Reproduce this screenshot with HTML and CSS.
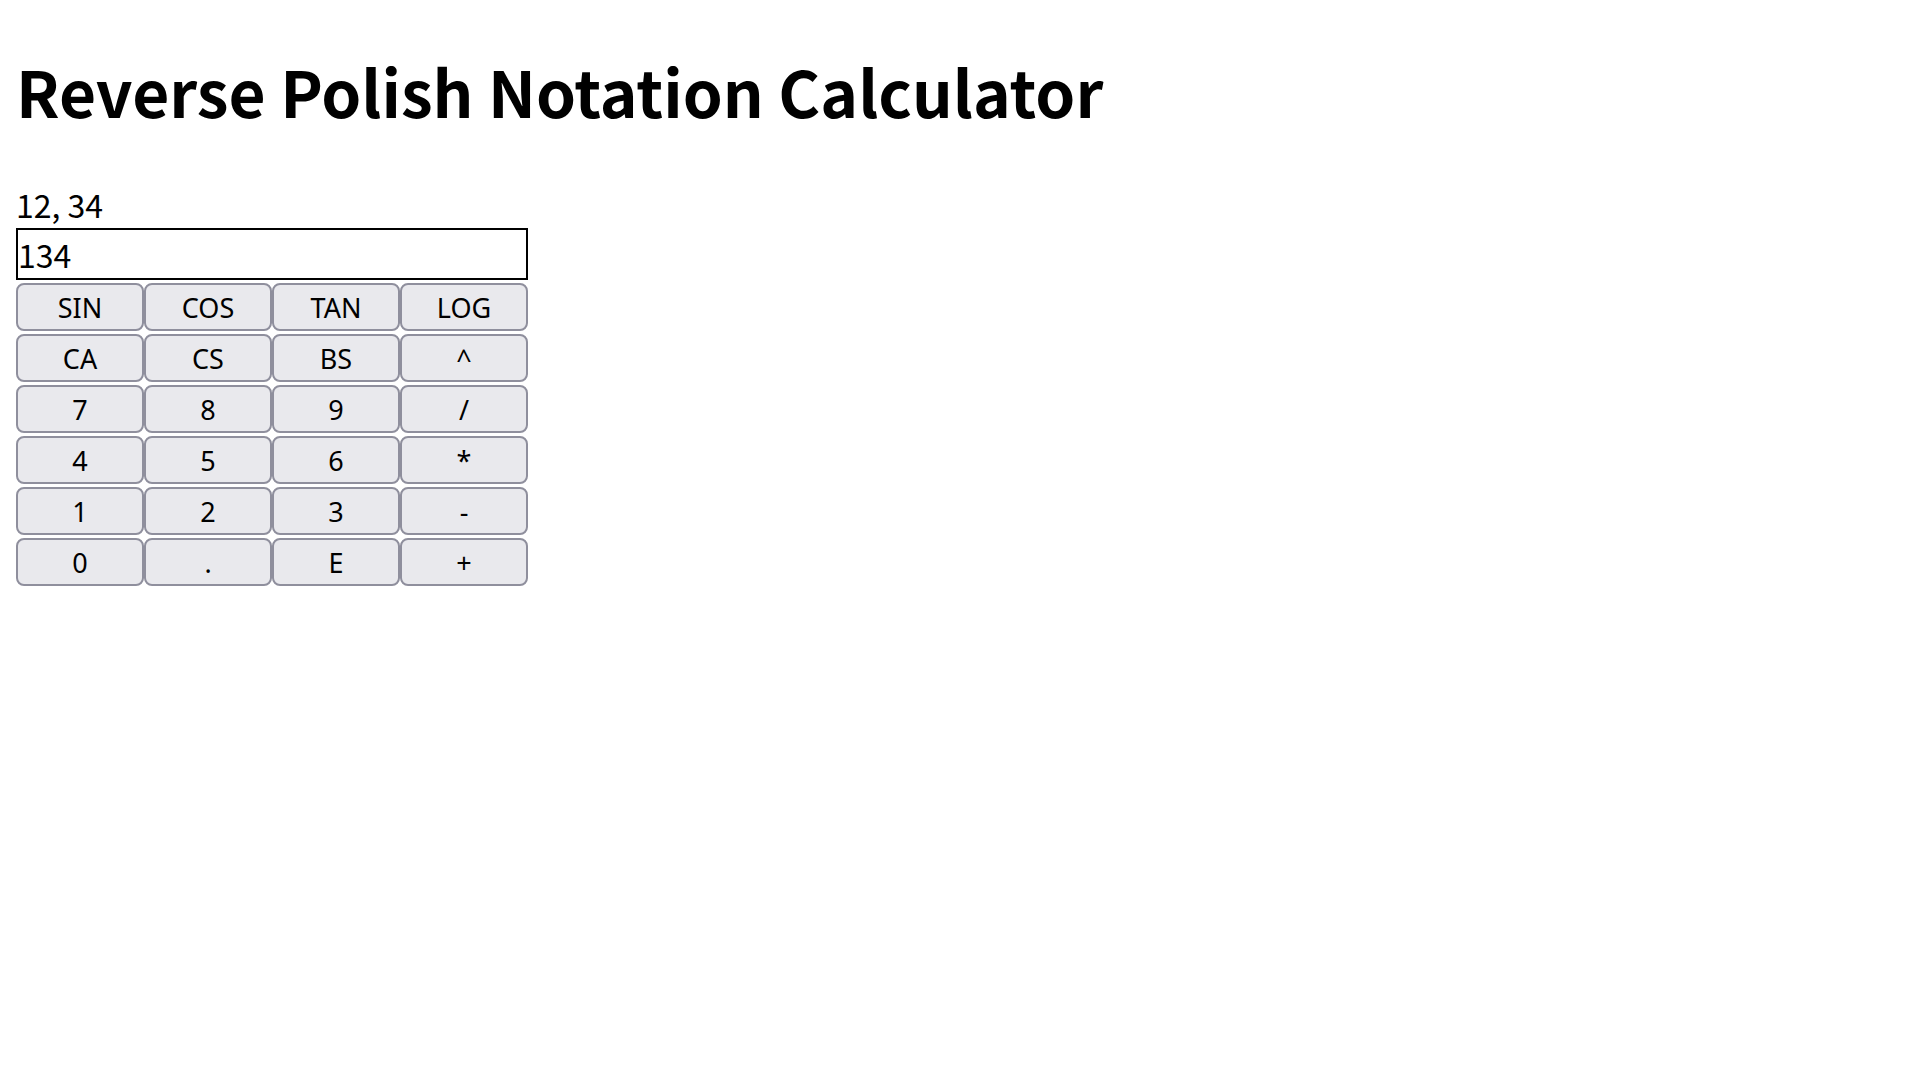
FILE: index.html
```
<!DOCTYPE html>
<html lang="en">
<head>
<meta charset="utf-8">
<title>Reverse Polish Notation Calculator</title>
<link rel="stylesheet" href="styles.css">
</head>
<body>
<h1 class="title">Reverse Polish Notation Calculator</h1>
<main class="calculator">
<output class="stack">12, 34</output>
<input class="display" type="text" value="134" aria-label="Current entry">
<div class="keys">
<button class="key">SIN</button><button class="key">COS</button><button class="key">TAN</button><button class="key">LOG</button>
<button class="key">CA</button><button class="key">CS</button><button class="key">BS</button><button class="key">^</button>
<button class="key">7</button><button class="key">8</button><button class="key">9</button><button class="key">/</button>
<button class="key">4</button><button class="key">5</button><button class="key">6</button><button class="key">*</button>
<button class="key">1</button><button class="key">2</button><button class="key">3</button><button class="key">-</button>
<button class="key">0</button><button class="key">.</button><button class="key">E</button><button class="key">+</button>
</div>
</main>
</body>
</html>
```
FILE: styles.css
```
body {
  margin: 0;
  padding: 16px;
  background: #fff;
  color: #000;
  font-family: "Noto Sans CJK SC", "Noto Sans", sans-serif;
  font-size: 32px;
}

.title {
  margin: 28px 0 44px;
  font-size: 64px;
  line-height: 92px;
}

.calculator {
  max-width: 512px;
}

.stack {
  display: block;
  line-height: 48px;
}

.display {
  display: block;
  box-sizing: border-box;
  width: 100%;
  height: 52px;
  margin: 0 0 3px;
  padding: 0;
  border: 2px solid #000;
  border-radius: 0;
  background: #fff;
  color: #000;
  font: inherit;
}

.keys {
  display: grid;
  grid-template-columns: repeat(4, 1fr);
  row-gap: 3px;
}

.key {
  height: 48px;
  padding: 2px 0 0;
  border: 2px solid #8f8f9d;
  border-radius: 8px;
  background: #e9e9ed;
  color: #000;
  font-family: "Noto Sans", sans-serif;
  font-size: 27px;
  line-height: 36px;
}
```
